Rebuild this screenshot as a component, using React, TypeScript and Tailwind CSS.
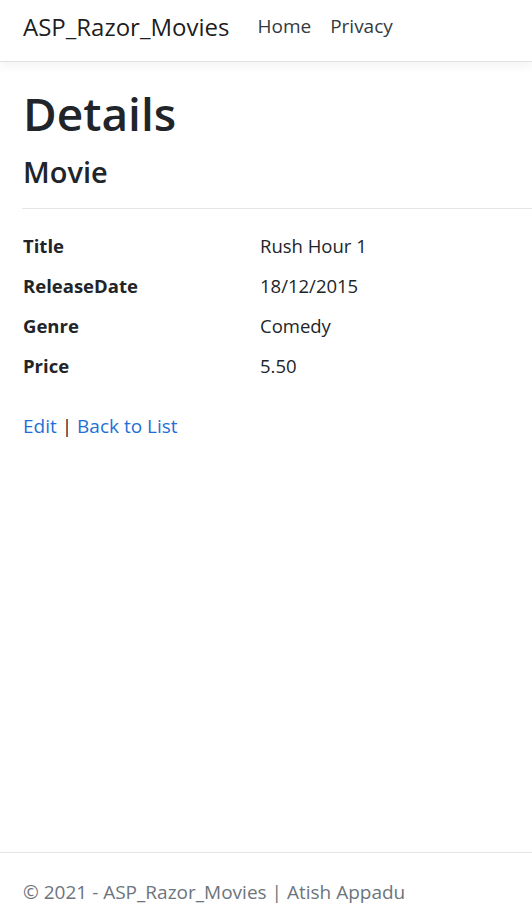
export default function App() {
  const rows = [
    { label: 'Title', value: 'Rush Hour 1' },
    { label: 'ReleaseDate', value: '18/12/2015' },
    { label: 'Genre', value: 'Comedy' },
    { label: 'Price', value: '5.50' },
  ];

  return (
    <div
      className="min-h-[917px] flex flex-col bg-white text-[#212529]"
      style={{ fontFamily: '"Open Sans", "Noto Sans", sans-serif' }}
    >
      <header className="h-[62px] border-b border-[#dee2e6] bg-white shadow-[0_4px_10px_rgba(0,0,0,0.05)] flex items-center pl-[23px] pb-[8px]">
        <span className="text-[24px] text-[rgba(0,0,0,0.9)] mr-[28px]">ASP_Razor_Movies</span>
        <nav className="flex gap-[19px] text-[19px] text-[#343a40]">
          <span>Home</span>
          <span>Privacy</span>
        </nav>
      </header>

      <main className="flex-1 pl-[23px] pt-[24px]">
        <h1 className="text-[46px] font-semibold leading-[1.2] mb-[14px]">Details</h1>
        <div>
          <h4 className="text-[29px] font-semibold leading-[1.2]">Movie</h4>
          <hr className="mt-[18px] mb-[23px] border-t border-[#e5e5e5] -ml-px" />
          <dl className="text-[18.5px]">
            {rows.map((row) => (
              <div key={row.label} className="flex h-[40px] items-start">
                <dt className="w-[237px] font-bold">{row.label}</dt>
                <dd>{row.value}</dd>
              </div>
            ))}
          </dl>
        </div>
        <div className="mt-[20px] text-[19px]">
          <a className="text-[#1f6fd6]">Edit</a> | <a className="text-[#1f6fd6]">Back to List</a>
        </div>
      </main>

      <footer className="h-[65px] border-t border-[#e5e5e5] pl-[23px] pt-[25px] text-[19px] text-[#6c757d]">
        © 2021 - ASP_Razor_Movies | Atish Appadu
      </footer>
    </div>
  );
}
